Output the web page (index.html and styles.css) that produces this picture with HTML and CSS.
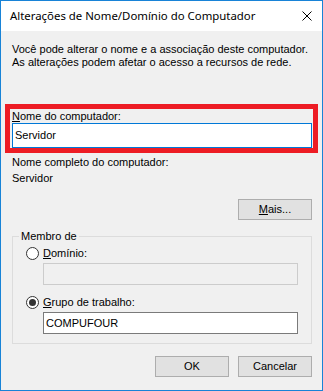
FILE: index.html
```html
<!DOCTYPE html>
<html lang="pt">
<head>
<meta charset="utf-8">
<link rel="stylesheet" href="styles.css">
</head>
<body>
<div class="window">
  <div class="titlebar">
    <span class="title">Alterações de Nome/Domínio do Computador</span>
    <svg class="close" width="10" height="10" viewBox="0 0 10 10"><path d="M0.5 0.5 L9.5 9.5 M9.5 0.5 L0.5 9.5" stroke="#000" stroke-width="1" fill="none"/></svg>
  </div>
  <div class="content">
    <p class="intro">Você pode alterar o nome e a associação deste computador.<br>As alterações podem afetar o acesso a recursos de rede.</p>
    <div class="highlight">
      <div class="label"><u>N</u>ome do computador:</div>
      <div class="textbox focused">Servidor</div>
    </div>
    <div class="label full">Nome completo do computador:</div>
    <div class="label fullval">Servidor</div>
    <div class="row-right more-row">
      <div class="button"><u>M</u>ais...</div>
    </div>
    <fieldset class="group">
      <legend>Membro de</legend>
      <div class="radio-row first">
        <span class="radio"></span><span><u>D</u>omínio:</span>
      </div>
      <div class="textbox disabled"></div>
      <div class="radio-row second">
        <span class="radio checked"></span><span><u>G</u>rupo de trabalho:</span>
      </div>
      <div class="textbox normal">COMPUFOUR</div>
    </fieldset>
    <div class="row-right actions">
      <div class="button">OK</div>
      <div class="button">Cancelar</div>
    </div>
  </div>
</div>
</body>
</html>
```
FILE: styles.css
```css
html, body {
  margin: 0;
  padding: 0;
  background: #ffffff;
}
.window {
  width: 323px;
  height: 391px;
  box-sizing: border-box;
  border: 1px solid #1883d7;
  background: #f0f0f0;
  display: flex;
  flex-direction: column;
  font-family: "Liberation Sans", Arial, sans-serif;
  font-size: 11px;
  color: #000;
}
.titlebar {
  height: 30px;
  flex: none;
  background: #ffffff;
  display: flex;
  align-items: center;
  justify-content: space-between;
  padding: 0 10px 0 9px;
}
.title {
  font-family: "Noto Sans", "Open Sans", sans-serif;
  font-size: 11.4px;
  color: #000;
  margin-top: -1px;
}
.close {
  display: block;
  margin-top: -1px;
}
.content {
  flex: 1;
  padding: 0 10px 0 11px;
  display: flex;
  flex-direction: column;
}
.intro {
  margin: 12px 0 0 0;
  line-height: 13px;
}
.highlight {
  margin: 35px -6px 0 -7px;
  border: 5px solid #ed1c24;
  padding: 1px 1px 0 2px;
}
.label {
  line-height: 13px;
}
.textbox {
  box-sizing: border-box;
  background: #ffffff;
  border: 1px solid #7a7a7a;
  line-height: 13px;
  padding-left: 2px;
  display: flex;
  align-items: center;
}
.textbox.focused {
  border-color: #0078d7;
  height: 25px;
}
.full {
  margin-top: 3px;
}
.fullval {
  margin-top: 3px;
}
.row-right {
  display: flex;
  justify-content: flex-end;
  gap: 9px;
}
.more-row {
  margin-top: 14px;
}
.button {
  box-sizing: border-box;
  width: 74px;
  height: 21px;
  border: 1px solid #adadad;
  background: #e1e1e1;
  display: flex;
  align-items: center;
  justify-content: center;
  line-height: 13px;
}
.group {
  margin: 10px 0 0 0;
  border: 1px solid #dcdcdc;
  padding: 4px 13px 9px 13px;
  min-width: 0;
}
.group legend {
  padding: 0 2px;
  margin-left: -7px;
  line-height: 13px;
}
.radio-row {
  display: flex;
  align-items: center;
  gap: 4px;
  line-height: 13px;
}
.radio {
  box-sizing: border-box;
  width: 13px;
  height: 13px;
  border-radius: 50%;
  border: 1px solid #333333;
  background: #ffffff;
  display: flex;
  align-items: center;
  justify-content: center;
}
.radio.checked::after {
  content: "";
  width: 7px;
  height: 7px;
  border-radius: 50%;
  background: #333333;
}
.textbox.disabled {
  margin: 3px 0 0 17px;
  height: 22px;
  background: #f0f0f0;
  border-color: #cccccc;
}
.radio-row.second {
  margin-top: 11px;
}
.textbox.normal {
  margin: 3px 0 0 17px;
  height: 22px;
}
.actions {
  margin-top: 12px;
}
```
